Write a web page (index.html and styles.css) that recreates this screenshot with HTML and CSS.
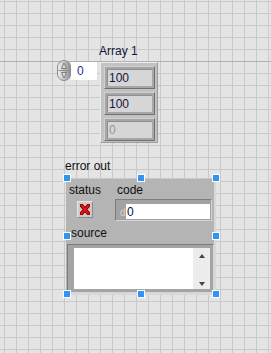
FILE: index.html
```html
<!DOCTYPE html>
<html lang="en">

<head>
    <meta charset="UTF-8">
    <meta name="viewport" content="width=device-width, initial-scale=1.0">
    <title>Front Panel</title>
    <link rel="stylesheet" href="styles.css">
</head>

<body>
    <div class="panel">
        <div class="array-ctl">
            <div class="label array-label">Array 1</div>
            <div class="array-body">
                <div class="index">
                    <div class="spinner">
                        <svg width="14" height="21" viewBox="0 0 14 21">
                            <defs>
                                <linearGradient id="spin" x1="0" y1="0" x2="1" y2="0">
                                    <stop offset="0" stop-color="#f2f2f2" />
                                    <stop offset="0.5" stop-color="#c4c4c4" />
                                    <stop offset="1" stop-color="#8e8e8e" />
                                </linearGradient>
                            </defs>
                            <rect x="0.5" y="0.5" width="13" height="20" rx="6.5" fill="url(#spin)" stroke="#8a8a8a" />
                            <line x1="1.5" y1="10.5" x2="12.5" y2="10.5" stroke="#8c8c8c" />
                            <path d="M7 3 L4.5 8.5 L9.5 8.5 Z" fill="#dcdcdc" stroke="#6a6a6a" stroke-width="0.8" />
                            <path d="M7 18 L4.5 12.5 L9.5 12.5 Z" fill="#dcdcdc" stroke="#6a6a6a" stroke-width="0.8" />
                        </svg>
                    </div>
                    <div class="index-field">0</div>
                </div>
                <div class="array-frame">
                    <div class="elem"><div class="elem-field">100</div></div>
                    <div class="elem"><div class="elem-field">100</div></div>
                    <div class="elem dim"><div class="elem-field">0</div></div>
                </div>
            </div>
        </div>

        <div class="cluster-ctl">
            <div class="label">error out</div>
            <div class="cluster">
                <div class="cluster-row">
                    <div class="status">
                        <div class="label">status</div>
                        <div class="led">
                            <svg width="10" height="11" viewBox="0 0 10 11">
                                <path d="M1.5 1.5 L8.5 9.5 M8.5 1.5 L1.5 9.5" stroke="#5a0000" stroke-width="3.6" stroke-linecap="round" />
                                <path d="M1.5 1.5 L8.5 9.5 M8.5 1.5 L1.5 9.5" stroke="#f01010" stroke-width="2" stroke-linecap="round" />
                            </svg>
                        </div>
                    </div>
                    <div class="code">
                        <div class="label code-label">code</div>
                        <div class="code-field">
                            <span class="radix">d</span>
                            <div class="code-value">0</div>
                        </div>
                    </div>
                </div>
                <div class="source">
                    <div class="label source-label">source</div>
                    <div class="source-box">
                        <div class="source-text"></div>
                        <div class="scrollbar">
                            <span class="arrow up"></span>
                            <span class="arrow down"></span>
                        </div>
                    </div>
                </div>

                <span class="handle h-tl"></span>
                <span class="handle h-tm"></span>
                <span class="handle h-tr"></span>
                <span class="handle h-ml"></span>
                <span class="handle h-mr"></span>
                <span class="handle h-bl"></span>
                <span class="handle h-bm"></span>
                <span class="handle h-br"></span>
            </div>
        </div>
    </div>
</body>

</html>
```

FILE: styles.css
```css
body {
    margin: 0;
    padding: 0;
    font-family: 'Liberation Sans', Arial, sans-serif;
    font-size: 12px;
    color: #111;
}

.panel {
    position: relative;
    width: 271px;
    height: 353px;
    overflow: hidden;
    background-color: #e4e4e4;
    background-image:
        linear-gradient(to bottom, transparent 61px, #b0b0b0 61px, #b0b0b0 62px, transparent 62px),
        linear-gradient(to right, #c9c9c9 1px, transparent 1px),
        linear-gradient(to bottom, #c9c9c9 1px, transparent 1px);
    background-size: 100% 100%, 12px 12px, 12px 12px;
    background-position: 0 0, 4px 0, 0 1px;
    background-repeat: no-repeat, repeat, repeat;
}

.label {
    height: 15px;
    line-height: 15px;
    white-space: nowrap;
}

/* array control */

.array-ctl {
    position: absolute;
    left: 57px;
    top: 44px;
}

.array-label {
    margin-left: 42px;
    color: #14143a;
}

.array-body {
    display: flex;
    align-items: flex-start;
}

.index {
    display: flex;
    align-items: flex-start;
}

.spinner {
    margin-top: 1px;
    width: 14px;
    height: 21px;
}

.spinner svg {
    display: block;
}

.index-field {
    box-sizing: border-box;
    margin-top: 3px;
    width: 26px;
    height: 18px;
    padding: 2px 0 0 6px;
    line-height: 15px;
    background: #fff;
    color: #1c3488;
}

.array-frame {
    box-sizing: border-box;
    margin-top: 3px;
    margin-left: 3px;
    width: 58px;
    height: 81px;
    padding: 3px 2px 1px 3px;
    display: flex;
    flex-direction: column;
    gap: 3px;
    background: #c2c2c2;
    border: 1px solid;
    border-color: #ececec #9c9c9c #9c9c9c #ececec;
}

.elem {
    box-sizing: border-box;
    width: 51px;
    height: 23px;
    padding: 2px;
    background: #a6a6a6;
    border: 1px solid;
    border-color: #d0d0d0 #707070 #707070 #d0d0d0;
}

.elem-field {
    box-sizing: border-box;
    height: 100%;
    padding-left: 1px;
    line-height: 16px;
    background: #d6d6d6;
    border-top: 1px solid #8e8e8e;
    border-left: 1px solid #8e8e8e;
    color: #14143a;
}

.elem.dim .elem-field {
    color: #8796b4;
}

/* error cluster */

.cluster-ctl {
    position: absolute;
    left: 65px;
    top: 159px;
}

.cluster {
    position: relative;
    box-sizing: border-box;
    margin-top: 4px;
    margin-left: 1px;
    width: 150px;
    height: 117px;
    padding: 4px 0 0 3px;
    background: #b4b4b4;
    border-top: 1px solid #c8c8c8;
    border-right: 2px solid #d8d8d8;
    border-bottom: 2px solid #d8d8d8;
}

.cluster-row {
    display: flex;
    align-items: flex-start;
    height: 39px;
}

.status {
    width: 46px;
}

.led {
    box-sizing: border-box;
    display: flex;
    align-items: center;
    justify-content: center;
    margin-top: 3px;
    margin-left: 8px;
    width: 16px;
    height: 17px;
    background: #d2c8c8;
    border: 1px solid;
    border-color: #e6e6e6 #8a8a8a #8a8a8a #e6e6e6;
}

.led svg {
    display: block;
}

.code-label {
    padding-left: 2px;
}

.code-field {
    box-sizing: border-box;
    display: flex;
    margin-top: 1px;
    width: 97px;
    height: 22px;
    padding: 4px 1px 1px 4px;
    background: #a2a2a2;
    border: 1px solid;
    border-color: #7e7e7e #d4d4d4 #d4d4d4 #7e7e7e;
}

.radix {
    width: 6px;
    font-size: 10px;
    line-height: 17px;
    color: #d2d2d2;
}

.code-value {
    flex: 1;
    padding-left: 1px;
    line-height: 16px;
    background: #fff;
    color: #0c1440;
}

.source-label {
    margin-top: 4px;
    padding-left: 2px;
}

.source-box {
    box-sizing: border-box;
    display: flex;
    margin-top: 3px;
    margin-left: -2px;
    width: 147px;
    height: 49px;
    padding: 3px 3px 3px 6px;
    background: #a4a4a4;
    border: 1px solid;
    border-color: #7c7c7c #d6d6d6 #d6d6d6 #7c7c7c;
}

.source-text {
    flex: 1;
    background: #fff;
}

.scrollbar {
    position: relative;
    width: 17px;
    background: #ececec;
}

.arrow {
    position: absolute;
    left: 6px;
    width: 0;
    height: 0;
    border-left: 3.5px solid transparent;
    border-right: 3.5px solid transparent;
}

.arrow.up {
    top: 6px;
    border-bottom: 4px solid #444;
}

.arrow.down {
    bottom: 3px;
    border-top: 4px solid #444;
}

/* selection handles */

.handle {
    position: absolute;
    box-sizing: border-box;
    width: 8px;
    height: 8px;
    background: #2f95f3;
    border: 1px solid #fff;
}

.h-tl, .h-ml, .h-bl { left: -3px; }
.h-tm, .h-bm { left: 71px; }
.h-tr, .h-mr, .h-br { left: 146px; }
.h-tl, .h-tm, .h-tr { top: -5px; }
.h-ml, .h-mr { top: 53px; }
.h-bl, .h-bm, .h-br { top: 111px; }
```
